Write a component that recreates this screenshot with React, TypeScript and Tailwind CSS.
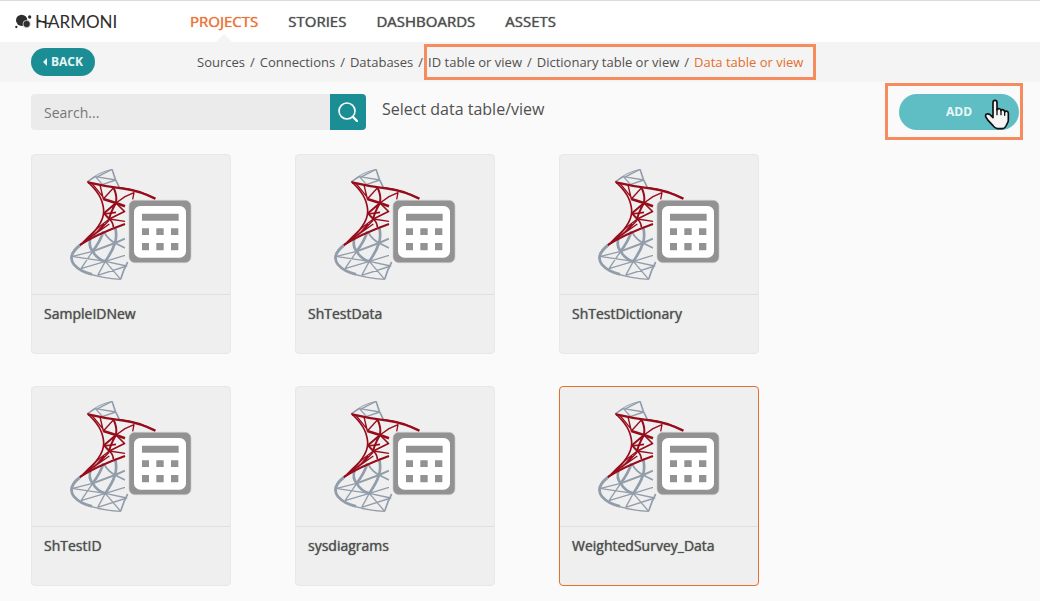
import clsx from 'clsx';

interface TableItem {
  name: string;
  selected?: boolean;
}

const NAV_ITEMS = ['PROJECTS', 'STORIES', 'DASHBOARDS', 'ASSETS'];

const PARENT_CRUMBS = ['Sources', 'Connections', 'Databases'];

const TABLES: TableItem[] = [
  { name: 'SampleIDNew' },
  { name: 'ShTestData' },
  { name: 'ShTestDictionary' },
  { name: 'ShTestID' },
  { name: 'sysdiagrams' },
  { name: 'WeightedSurvey_Data', selected: true },
];

function Logo() {
  return (
    <a href="#" className="relative flex items-center gap-[3px] text-[#2e2e2e]">
      <svg viewBox="0 0 51 45" className="h-[15px] w-[17px]" fill="currentColor" aria-hidden="true">
        <circle cx="20" cy="19" r="17" />
        <circle cx="35" cy="30" r="11" stroke="#fff" strokeWidth="2" />
        <circle cx="44" cy="9" r="5" />
        <circle cx="4" cy="39" r="3.5" />
      </svg>
      <span className="font-['Lato'] text-[17px] leading-5">HARMONI</span>
      <svg viewBox="0 0 51 30" className="absolute top-[5px] left-[21px] h-[10px] w-[17px]" fill="none" aria-hidden="true">
        <path d="M3 8C17 11 25 22 43 19" stroke="currentColor" strokeWidth="4" />
      </svg>
    </a>
  );
}

/** SQL Server mark with the table badge over its right side. */
function SqlTableIcon() {
  return (
    <svg viewBox="30 27 366 336" className="h-28 w-[122px]" fill="none" aria-hidden="true">
      <g stroke="#929dab" strokeLinejoin="round">
        <path d="M84 64Q112 38 156 28" strokeWidth="3" />
        <path d="M156 28L166 58L178 82" strokeWidth="5" />
        <path d="M84 64Q96 56 106 50L168 60M106 50L128 74M168 60L126 74M113 50L156 28" strokeWidth="4" />
        <path d="M63 251C36 270 28 290 38 308C60 338 112 354 182 358" strokeWidth="4" />
        <path d="M60 256C32 278 28 296 42 314Q60 335 96 343" strokeWidth="8" />
        <path d="M182 358Q190 330 203 306" strokeWidth="5" />
        <path d="M92 232Q84 258 98 274Q112 298 136 304Q157 274 165 249Q172 226 165 200" strokeWidth="8" />
        <path d="M98 274Q122 242 130 214" strokeWidth="8" />
        <path d="M132 216Q144 238 165 249L195 264" strokeWidth="5" />
        <path d="M98 274L165 249L195 236" strokeWidth="6" />
        <path d="M38 289L98 274L63 326M40 290L136 304L63 326M136 304L113 346M136 304L182 358M136 304L195 286M136 304L200 318L113 346" strokeWidth="4" />
      </g>
      <path d="M195 120H206V300L195 304Z" fill="#efefef" />
      <g stroke="#970c1b" strokeLinejoin="round">
        <path d="M82 64C112 92 128 116 131 150C134 190 94 228 60 256" strokeWidth="5" />
        <path d="M84 67Q140 80 190 86Q242 94 286 116" strokeWidth="7" />
        <path d="M180 83Q235 87 286 117" strokeWidth="4" />
        <path d="M130 117L168 129L195 139" strokeWidth="8" />
        <path d="M120 75L130 117L160 84M96 70L130 112M168 129L195 110L222 98L218 118" strokeWidth="4" />
        <path d="M161 84Q172 106 168 129Q150 160 148 177M168 129L132 160L148 177" strokeWidth="6" />
        <path d="M148 177Q160 188 160 202M168 129L195 156M148 177L195 154M132 162L168 157" strokeWidth="5" />
        <path d="M62 254Q100 212 148 177M148 177L195 184" strokeWidth="4" />
        <path d="M60 255Q106 224 195 192" strokeWidth="6" />
        <path d="M72 245Q116 216 148 180M82 238L148 192M102 226L132 192" strokeWidth="4" />
      </g>
      <rect x="207" y="121" width="186" height="187" rx="17" fill="#929292" stroke="#c8c8c8" strokeWidth="2" />
      <rect x="222" y="138" width="156" height="155" rx="19" fill="#fff" />
      <path
        d="M246 161h110v21h-110zM246 205h21v20h-21zM289 205h22v20h-22zM333 205h22v20h-22zM246 249h21v22h-21zM289 249h22v22h-22zM333 249h22v22h-22z"
        fill="#929292"
      />
    </svg>
  );
}

function TableCard({ name, selected }: TableItem) {
  return (
    <button
      type="button"
      aria-pressed={!!selected}
      className={clsx(
        'flex h-[200px] flex-col rounded border bg-[#efefef] text-left',
        selected ? 'border-[#e36f2c]' : 'border-[#e8e8e8]',
      )}
    >
      <span className="flex h-[140px] w-full items-center justify-center border-b border-[#e0e0e0]">
        <SqlTableIcon />
      </span>
      <span className="px-3 pt-2 text-sm leading-[22px] font-medium text-[#505050] [text-shadow:0_0_1px_currentColor]">
        {name}
      </span>
    </button>
  );
}

function HandCursor() {
  return (
    <svg viewBox="0 0 78 96" className="absolute top-1 right-[9px] h-8 w-[26px]" aria-hidden="true">
      <path
        d="M27 59V14C27 5 39 5 39 14V36C42 30 51 31 51 38C54 33 62 35 62 42C66 37 73 40 73 46V67C73 74 68 78 66 84Q62 92 54 92H40Q32 91 27 83L13 68L5 56C3 48 12 45 18 50Z"
        fill="#f5f5f5"
        stroke="#111"
        strokeWidth="5"
        strokeLinejoin="round"
      />
      <path d="M39 34V50M51 38V50M62 42V52" stroke="#111" strokeWidth="4" strokeLinecap="round" />
    </svg>
  );
}

export default function App() {
  return (
    <div className="min-h-screen bg-[#fafafa] font-['Open_Sans',sans-serif] text-[#505050]">
      <header className="flex h-[42px] items-center border-t border-[#d9dcdc] bg-white pl-[15px]">
        <div className="w-[175px]">
          <Logo />
        </div>
        <nav className="flex h-full gap-[30px]">
          {NAV_ITEMS.map((item, i) => (
            <a
              key={item}
              href="#"
              className={clsx(
                'relative flex h-full items-center text-[15px] font-medium [text-shadow:0_0_1px_currentColor]',
                i === 0 && 'text-[#e8743b]',
              )}
            >
              {item}
              {i === 0 && (
                <span className="absolute bottom-0 left-1/2 h-2 w-4 -translate-x-1/2 bg-[#f4f4f4] [clip-path:polygon(50%_0,100%_100%,0_100%)]" />
              )}
            </a>
          ))}
        </nav>
      </header>

      <div className="flex h-10 items-center bg-[#f4f4f4] pl-[31px]">
        <div className="w-[166px]">
          <button
            type="button"
            className="flex h-7 w-16 items-center justify-center gap-1 rounded-full bg-[#1b8e95] text-xs font-bold text-[#e8f4f4]"
          >
            <svg viewBox="0 0 4 8" className="h-2 w-1" fill="currentColor" aria-hidden="true">
              <path d="M4 0V8L0 4Z" />
            </svg>
            BACK
          </button>
        </div>
        <nav aria-label="Breadcrumb" className="flex items-center text-[13px] leading-5 whitespace-nowrap">
          {PARENT_CRUMBS.map((crumb) => (
            <span key={crumb} className="flex">
              <a href="#">{crumb}</a>
              <span className="px-[5px]">/</span>
            </span>
          ))}
          <span className="relative flex">
            <a href="#">ID table or view</a>
            <span className="px-[5px]">/</span>
            <a href="#">Dictionary table or view</a>
            <span className="px-[5px]">/</span>
            <a href="#" aria-current="page" className="text-[#e36f2c]">Data table or view</a>
            <span className="pointer-events-none absolute -inset-y-2 -right-[13px] -left-1 border-3 border-[#f68b5e]" />
          </span>
        </nav>
      </div>

      <main className="pt-3 pr-[21px] pb-4 pl-[31px]">
        <div className="flex items-start">
          <form className="flex h-9 w-[335px]" onSubmit={(e) => e.preventDefault()}>
            <input
              type="search"
              aria-label="Search tables"
              placeholder="Search..."
              className="min-w-0 flex-1 rounded-l bg-[#ebebeb] px-[13px] pt-0.5 text-sm placeholder:text-[#777]"
            />
            <button
              type="submit"
              aria-label="Search"
              className="flex w-9 items-center justify-center rounded-r bg-[#1b8e95] text-white"
            >
              <svg viewBox="0 0 20 20" className="size-5" fill="none" stroke="currentColor" aria-hidden="true">
                <circle cx="9" cy="9" r="8" strokeWidth="1.6" />
                <path d="M15 15L19 19" strokeWidth="2.4" strokeLinecap="round" />
              </svg>
            </button>
          </form>
          <h1 className="ml-4 text-base leading-[30px]">Select data table/view</h1>
          <div className="relative ml-auto">
            <button
              type="button"
              className="h-9 w-[120px] rounded-full bg-[#5ebec4] text-xs font-bold text-[#eaf7f7]"
            >
              ADD
            </button>
            <HandCursor />
            <span className="pointer-events-none absolute -top-[11px] -right-1 -bottom-[10px] -left-[14px] border-3 border-[#f68b5e]" />
          </div>
        </div>

        <div className="mt-6 grid grid-cols-[repeat(auto-fill,200px)] gap-x-16 gap-y-8 pr-[200px]">
          {TABLES.map((table) => (
            <TableCard key={table.name} {...table} />
          ))}
        </div>
      </main>
    </div>
  );
}
